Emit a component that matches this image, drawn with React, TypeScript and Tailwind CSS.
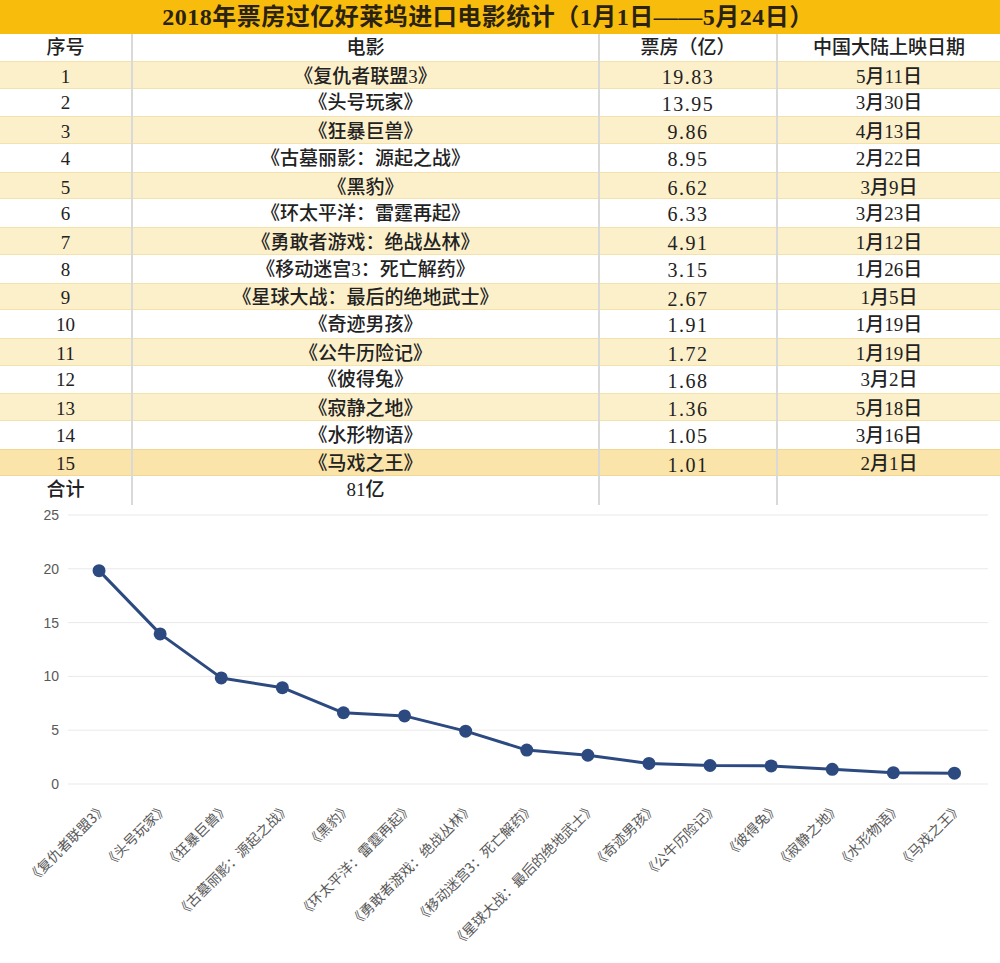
const movies = [
  { rank: 1, name: '《复仇者联盟3》', box: '19.83', value: 19.83, date: '5月11日' },
  { rank: 2, name: '《头号玩家》', box: '13.95', value: 13.95, date: '3月30日' },
  { rank: 3, name: '《狂暴巨兽》', box: '9.86', value: 9.86, date: '4月13日' },
  { rank: 4, name: '《古墓丽影：源起之战》', box: '8.95', value: 8.95, date: '2月22日' },
  { rank: 5, name: '《黑豹》', box: '6.62', value: 6.62, date: '3月9日' },
  { rank: 6, name: '《环太平洋：雷霆再起》', box: '6.33', value: 6.33, date: '3月23日' },
  { rank: 7, name: '《勇敢者游戏：绝战丛林》', box: '4.91', value: 4.91, date: '1月12日' },
  { rank: 8, name: '《移动迷宫3：死亡解药》', box: '3.15', value: 3.15, date: '1月26日' },
  { rank: 9, name: '《星球大战：最后的绝地武士》', box: '2.67', value: 2.67, date: '1月5日' },
  { rank: 10, name: '《奇迹男孩》', box: '1.91', value: 1.91, date: '1月19日' },
  { rank: 11, name: '《公牛历险记》', box: '1.72', value: 1.72, date: '1月19日' },
  { rank: 12, name: '《彼得兔》', box: '1.68', value: 1.68, date: '3月2日' },
  { rank: 13, name: '《寂静之地》', box: '1.36', value: 1.36, date: '5月18日' },
  { rank: 14, name: '《水形物语》', box: '1.05', value: 1.05, date: '3月16日' },
  { rank: 15, name: '《马戏之王》', box: '1.01', value: 1.01, date: '2月1日' },
]

const tableFont = { fontFamily: '"Liberation Serif", "Noto Sans CJK SC", serif' }
const chartFont = '"Noto Sans CJK SC", "Liberation Sans", sans-serif'

// chart geometry (svg coords)
const PLOT_LEFT = 68.5
const STEP = 61.1
const Y_ZERO = 284
const Y_PER_UNIT = 10.76

const xOf = (i: number) => PLOT_LEFT + STEP / 2 + i * STEP
const yOf = (v: number) => Y_ZERO - v * Y_PER_UNIT

function rowBg(rank: number) {
  if (rank === 15) return 'bg-[#fae4aa] border-y border-[#f0d894]'
  if (rank % 2 === 1) return 'bg-[#fcf0cb] border-y border-[#f4e2ad]'
  return 'bg-white'
}

function Cell({ children, last }: { children: React.ReactNode; last?: boolean }) {
  return (
    <div
      className={`flex items-center justify-center ${last ? '' : 'border-r-2 border-[#d9d9d9]'}`}
    >
      {children}
    </div>
  )
}

function StatsTable() {
  return (
    <div style={tableFont} className="text-[#222] font-medium">
      {/* Title */}
      <div className="h-[34px] bg-[#f8bc0c] flex items-center justify-center pr-[24px]">
        <span className="text-[24px] font-bold text-[#2a2212] tracking-[0.5px]">
          2018年票房过亿好莱坞进口电影统计（1月1日——5月24日）
        </span>
      </div>

      {/* Header */}
      <div className="grid grid-cols-[133px_467px_178px_222px] h-[27px] bg-white text-[19px]">
        <Cell>序号</Cell>
        <Cell>电影</Cell>
        <Cell>票房（亿）</Cell>
        <Cell last>中国大陆上映日期</Cell>
      </div>

      {/* Rows */}
      {movies.map((m) => (
        <div
          key={m.rank}
          className={`grid grid-cols-[133px_467px_178px_222px] h-[27.7px] text-[19px] ${rowBg(m.rank)}`}
        >
          <Cell>{m.rank}</Cell>
          <Cell>{m.name}</Cell>
          <Cell>
            <span className="tracking-[1.5px] text-[20px]">{m.box}</span>
          </Cell>
          <Cell last>{m.date}</Cell>
        </div>
      ))}

      {/* Total */}
      <div className="grid grid-cols-[133px_467px_178px_222px] h-[24px] bg-white text-[19px]">
        <Cell>合计</Cell>
        <Cell>81亿</Cell>
        <Cell>{''}</Cell>
        <Cell last>{''}</Cell>
      </div>
    </div>
  )
}

function LineChart() {
  const ticks = [0, 5, 10, 15, 20, 25]
  const points = movies.map((m, i) => `${xOf(i)},${yOf(m.value)}`).join(' ')

  return (
    <svg width="1000" height="463" viewBox="0 0 1000 463" className="block">
      {/* grid + y labels */}
      {ticks.map((t) => (
        <g key={t}>
          <line x1={68} x2={988} y1={yOf(t)} y2={yOf(t)} stroke="#e9e9e9" strokeWidth={1} />
          <text
            x={59}
            y={yOf(t) + 5}
            textAnchor="end"
            fontSize={14}
            fill="#595959"
            fontFamily='"Liberation Sans", sans-serif'
          >
            {t}
          </text>
        </g>
      ))}

      {/* line */}
      <polyline points={points} fill="none" stroke="#2d4a80" strokeWidth={3} strokeLinejoin="round" />
      {movies.map((m, i) => (
        <circle key={m.rank} cx={xOf(i)} cy={yOf(m.value)} r={6.5} fill="#2d4a80" />
      ))}

      {/* x labels */}
      {movies.map((m, i) => {
        const x = xOf(i) + 9
        const y = 309
        return (
          <text
            key={m.rank}
            x={x}
            y={y}
            textAnchor="end"
            fontSize={14}
            fill="#595959"
            fontFamily={chartFont}
            transform={`rotate(-45 ${x} ${y})`}
          >
            {m.name}
          </text>
        )
      })}
    </svg>
  )
}

export default function App() {
  return (
    <div className="w-[1000px] h-[963px] bg-white overflow-hidden">
      <StatsTable />
      <LineChart />
    </div>
  )
}
